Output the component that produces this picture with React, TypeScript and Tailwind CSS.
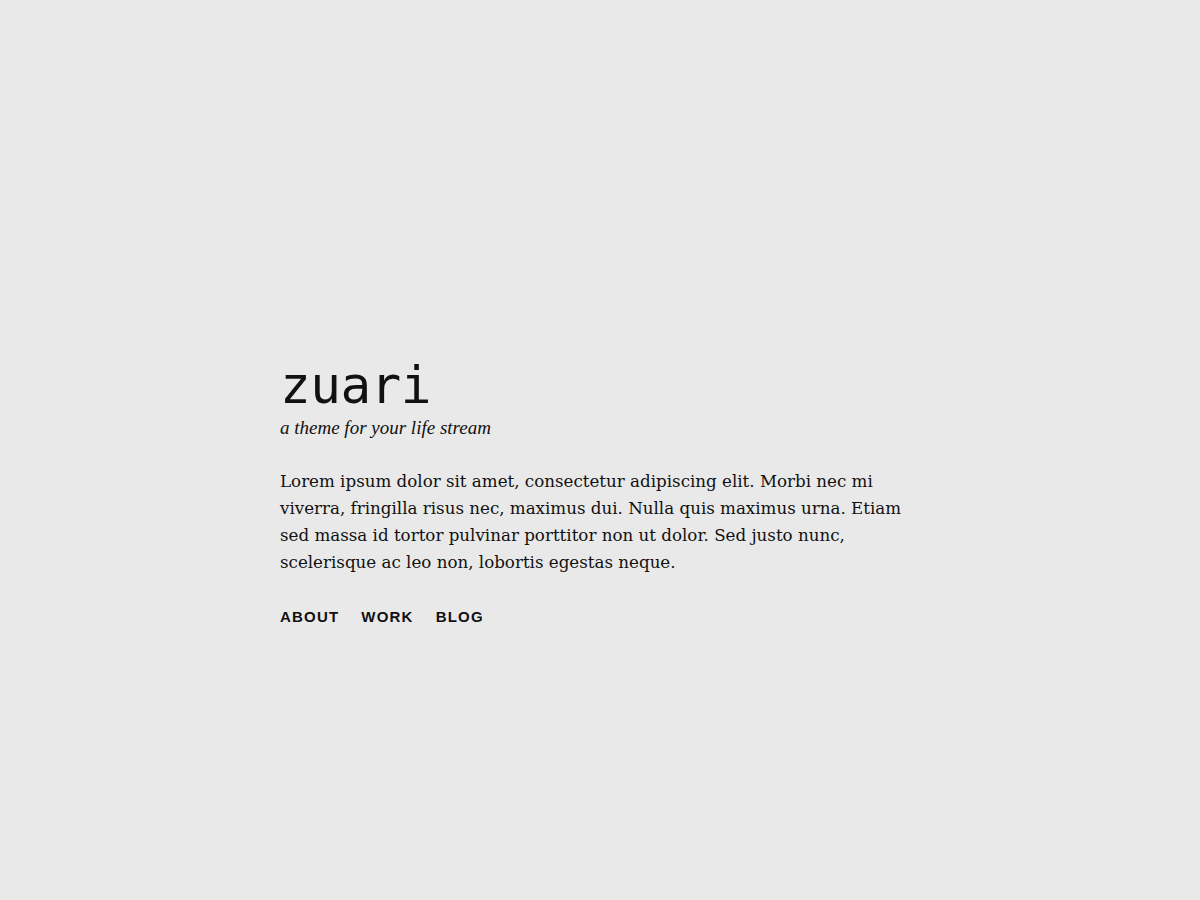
export default function App() {
  const lines = [
    "Lorem ipsum dolor sit amet, consectetur adipiscing elit. Morbi nec mi",
    "viverra, fringilla risus nec, maximus dui. Nulla quis maximus urna. Etiam",
    "sed massa id tortor pulvinar porttitor non ut dolor. Sed justo nunc,",
    "scelerisque ac leo non, lobortis egestas neque.",
  ];
  return (
    <div className="min-h-[900px] w-full bg-[#e9e9e9] text-[#111111]">
      <div className="flex w-[920px] flex-col pl-[280px] pt-[358px]">
        <h1 className="font-['DejaVu_Sans_Mono','Liberation_Mono',monospace] text-[51px] leading-[56px] font-normal tracking-[-0.5px]">
          zuari
        </h1>
        <p className="mt-[2px] font-['Liberation_Serif',serif] text-[19px] leading-[24px] italic">
          a theme for your life stream
        </p>
        <div className="mt-[28px] font-['DejaVu_Serif','Liberation_Serif',serif] text-[16.7px] leading-[27px]">
          {lines.map((l, i) => (
            <span key={i} className="block whitespace-nowrap">
              {l}
            </span>
          ))}
        </div>
        <nav className="mt-[30px] flex gap-[22px] font-['Liberation_Sans',Arial,sans-serif] text-[15px] font-bold tracking-[0.08em] uppercase">
          <a>About</a>
          <a>Work</a>
          <a>Blog</a>
        </nav>
      </div>
    </div>
  );
}
